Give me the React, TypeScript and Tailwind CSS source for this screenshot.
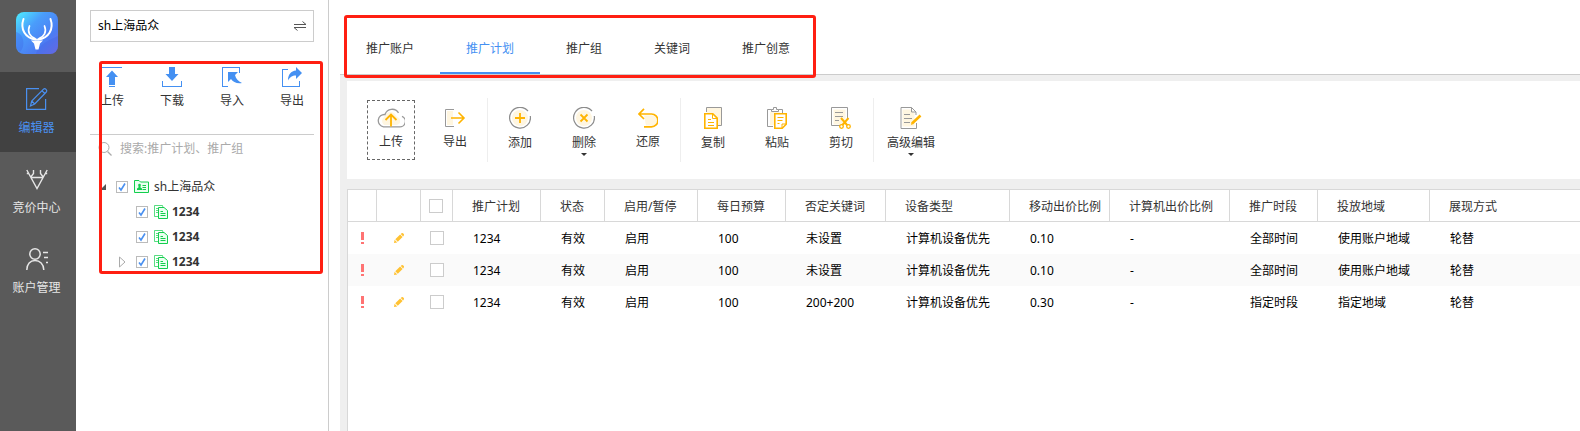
import { FC, ReactNode } from "react";

const LogoIcon = () => (
    <svg viewBox="0 0 42 42" className="size-[42px]">
        <defs>
            <linearGradient id="logo" x1="0" y1="0" x2="1" y2="1">
                <stop offset="0" stopColor="#4df0ff" />
                <stop offset="0.35" stopColor="#4a9dfb" />
                <stop offset="0.7" stopColor="#4c7cf3" />
                <stop offset="1" stopColor="#7b6be0" />
            </linearGradient>
        </defs>
        <rect width="42" height="42" rx="8" fill="url(#logo)" />
        <path d="M0 20C8 22 10 34 4 40A8 8 0 0 1 0 34zM20 42C22 32 34 28 42 24V34A8 8 0 0 1 34 42z" fill="#3f63e6" opacity="0.35" />
        <g fill="none" stroke="#fff" strokeLinecap="round">
            <path d="M7.500 7C4 17 9 26 20 27.500M34.500 7C38 17 33 26 22 27.500" strokeWidth="2" />
            <path d="M13.500 14C11 20 14 25 19 26.500M28.500 14C31 20 28 25 23 26.500" strokeWidth="1.700" />
        </g>
        <path d="M15 28.500h12l-3 3-1.500 6h-3l-1.500-6z" fill="#fff" />
    </svg>
);

const EditorIcon = () => (
    <svg viewBox="0 0 22 22" className="size-[22px]" fill="none" stroke="currentColor" strokeWidth="1.200">
        <path d="M13 .6H.6v20.800h19V11" />
        <path d="M4.500 18l1.200-5L17.500 1.200q1.200-1 2.500.2 1.300 1.300.3 2.600L8.700 16zM5.700 13L8.700 16M16 2.800l3.200 3.100" />
    </svg>
);

const BidIcon = () => (
    <svg viewBox="0 0 22 22" className="size-[22px]" fill="none" stroke="currentColor" strokeWidth="1.400">
        <path d="M.8 2L11 20.500 21.200 2M4.500 9.500h13M7.500 2v3.500L4.800 9M14.500 2v3.500L17.200 9M.8 5.500h2M21.200 5.500h-2" />
    </svg>
);

const AccountIcon = () => (
    <svg viewBox="0 0 22 22" className="size-[22px]" fill="none" stroke="currentColor" strokeWidth="1.500">
        <circle cx="9" cy="6" r="5.200" />
        <path d="M.8 22c0-6 3.500-9.500 8.200-9.500s8.800 3.500 8.800 9.500M17 4.500h5M18 9.500h4M20 14.500h2" />
    </svg>
);

const UploadIcon = () => (
    <svg viewBox="0 0 20 20" className="size-5" fill="currentColor">
        <path d="M0 0h20v1H0zM10 3.500l6 6.500h-3v8H7v-8H4zM7 19h6v1H7z" />
    </svg>
);

const DownloadIcon = () => (
    <svg viewBox="0 0 20 20" className="size-5" fill="currentColor">
        <path d="M7 0h6v7h3.500L10 14 3.500 7H7zM0 14h1v5h18v-5h1v6H0z" />
    </svg>
);

const ImportIcon = () => (
    <svg viewBox="0 0 20 20" className="size-5" fill="currentColor">
        <path d="M0 0h18v6h-1V1H1v18h5v1H0zM6 5h10l-3 3c1 4 3 6 7 8-5 1-9-1-11-4l-3 3z" />
    </svg>
);

const ExportIcon = () => (
    <svg viewBox="0 0 20 20" className="size-5" fill="currentColor">
        <path d="M0 2h6v1H1v16h16v-5h1v6H0zM14 0l6 6-6 6V8.500c-4 0-6 1.500-8 5 0-6 3-9.500 8-10z" />
    </svg>
);

const SwapIcon = () => (
    <svg viewBox="0 0 12 10" className="w-3 h-[10px]" fill="none" stroke="#555" strokeWidth="1">
        <path d="M0 3.500h12L8.500 .5M12 6.500H0L3.500 9.500" />
    </svg>
);

const SearchIcon = () => (
    <svg viewBox="0 0 14 14" className="size-[14px] shrink-0" fill="none" stroke="#aaa">
        <circle cx="6" cy="5.500" r="5" />
        <path d="M9.500 9.500L13.500 13.500" strokeWidth="1.300" />
    </svg>
);

const FolderIcon = () => (
    <svg viewBox="0 0 15 13" className="w-[15px] h-[13px]" fill="none" stroke="#13ce4d">
        <path d="M.5 12.500V.5H5l1.500 1.500h8v10.500z" fill="#eafff0" />
        <path d="M8.500 5.500H12M8.500 7.500H12M8.500 9.500H12" />
        <path d="M3 10h5V8.500L6.500 7.500v-2h-2v2L3 8.500z" fill="#13ce4d" stroke="none" />
        <circle cx="5.500" cy="5" r="1.300" fill="#13ce4d" stroke="none" />
    </svg>
);

const PlanIcon = () => (
    <svg viewBox="0 0 14 14" className="size-[14px]" fill="none" stroke="#13ce4d">
        <path d="M4 11.500H.5V.5h8L9 2.500M2 3.500h2.500M2 5.500h2M2 7.500h2" opacity="0.7" />
        <path d="M4.500 13.500v-11H10l3.500 3v8z" fill="#eafff0" />
        <path d="M6.500 6.500H9M6.500 8.500h5M6.500 10.500h5" />
    </svg>
);

const CloudIcon = () => (
    <svg viewBox="0 0 28 20" className="w-7 h-5" fill="none">
        <path d="M7 17a5 5 0 0 1 0-8C9 3 17 2 19 8l4 3v4l-3 2z" fill="#fff6e0" />
        <path d="M21.500 4.800A7.500 7.500 0 0 0 8 6.500 6.200 6.200 0 0 0 6.500 18.800H22a5.500 5.500 0 0 0 3-10.500" stroke="#999" strokeWidth="1.300" />
        <path d="M14 18.500V7M8.500 12L14 6.500l5.500 5.500" stroke="#ffb400" strokeWidth="1.800" />
    </svg>
);

const OutIcon = () => (
    <svg viewBox="0 0 22 20" className="w-[22px] h-5" fill="none">
        <path d="M3 3h6v14H3z" fill="#fff6e0" />
        <path d="M10 1.500H1.500v17H10" stroke="#999" />
        <path d="M7 10h13M14.500 4.500L20 10l-5.500 5.500" stroke="#ffb400" strokeWidth="1.600" />
    </svg>
);

const AddIcon = () => (
    <svg viewBox="0 0 22 22" className="size-[22px]" fill="none">
        <circle cx="11" cy="11" r="8" fill="#fff6e0" />
        <path d="M19 4A10.400 10.400 0 1 0 21.300 9" stroke="#8c8c8c" strokeWidth="1.200" />
        <path d="M11 6v10M6 11h10" stroke="#ffb400" strokeWidth="1.800" />
    </svg>
);

const DeleteIcon = () => (
    <svg viewBox="0 0 22 22" className="size-[22px]" fill="none">
        <circle cx="11" cy="11" r="8" fill="#fff6e0" />
        <path d="M19 4A10.400 10.400 0 1 0 21.300 9" stroke="#8c8c8c" strokeWidth="1.200" />
        <path d="M7.500 7.500l7 7M14.500 7.500l-7 7" stroke="#ffb400" strokeWidth="1.800" />
    </svg>
);

const UndoIcon = () => (
    <svg viewBox="0 0 20 20" className="size-5" fill="none">
        <path d="M6 7.500h8a5 5 0 0 1 0 10H8z" fill="#fff6e0" />
        <path d="M6 .8L1 6l5 5M1 6h12.500a6.400 6.400 0 0 1 0 12.800H6" stroke="#ffb400" strokeWidth="1.700" />
    </svg>
);

const CopyIcon = () => (
    <svg viewBox="0 0 18 22" className="w-[18px] h-[22px]" fill="none">
        <path d="M2.500 5V.5h15v18H14" stroke="#999" fill="#fff6e0" />
        <path d="M.8 6.800h8l4.400 4.400v10H.8z" fill="#fff" stroke="#ffb400" strokeWidth="1.600" />
        <path d="M8.500 7v4.500H13M4 12.500h3M4 15.500h6M4 18.500h6" stroke="#ffb400" />
    </svg>
);

const PasteIcon = () => (
    <svg viewBox="0 0 20 22" className="w-5 h-[22px]" fill="none">
        <path d="M3 5h10v13H3z" fill="#fff6e0" />
        <path d="M6 19.500H.5v-17h4v2h7v-2h4V6M4.500 2.500H6.500V.5h3v2h2" stroke="#999" />
        <path d="M7.800 6.800h11.400v10.400l-4 4H7.800z" fill="#fff" stroke="#ffb400" strokeWidth="1.600" />
        <path d="M10.500 10.500h6M10.500 13.500h5M10.500 16.500h2M15 21v-4h4" stroke="#ffb400" />
    </svg>
);

const CutIcon = () => (
    <svg viewBox="0 0 20 22" className="w-5 h-[22px]" fill="none">
        <path d="M2.500 2.500h12v15h-12z" fill="#fff6e0" />
        <path d="M9 18.500H.5V.5h16V11M4 5.500h8M4 9.500h8M4 13.500h4" stroke="#999" />
        <path d="M10 11l6.500 7.500M17.500 11L11 18.500" stroke="#ffb400" strokeWidth="2" />
        <circle cx="10.500" cy="19.500" r="1.800" fill="#fff" stroke="#ffb400" strokeWidth="1.300" />
        <circle cx="17.500" cy="19.500" r="1.800" fill="#fff" stroke="#ffb400" strokeWidth="1.300" />
    </svg>
);

const AdvancedIcon = () => (
    <svg viewBox="0 0 22 22" className="size-[22px]" fill="none">
        <path d="M2.500 2.500h9l3 4v13h-12z" fill="#fff6e0" />
        <path d="M16.500 16v5.500H1V.5h10.500l4.500 4.500v3M11.500 .5V5H16M4 7.500h6M4 11.500h8M4 15.500h6" stroke="#999" />
        <path d="M12 16.500l8.500-8" stroke="#ffb400" strokeWidth="2.600" />
        <path d="M11 18l.5-2.500L13 17z" fill="#ffb400" />
    </svg>
);

const PencilIcon = () => (
    <svg viewBox="0 0 10 10" className="size-[10px]" fill="#ffc233">
        <path d="M0 10l.6-3.200 2.600 2.600zM1.300 6.200l4.800-4.600 2.500 2.500-4.800 4.700zM6.800 1l.7-.7q.8-.6 1.500 0l.8.800q.5.700 0 1.400l-.7.900z" />
    </svg>
);

const Caret = () => (
    <svg viewBox="0 0 6 4" className="w-[6px] h-1" fill="#333">
        <path d="M0 0h6L3 3z" />
    </svg>
);

const navItems = [
    { label: "编辑器", icon: <EditorIcon />, active: true },
    { label: "竞价中心", icon: <BidIcon />, active: false },
    { label: "账户管理", icon: <AccountIcon />, active: false },
];

const syncItems = [
    { label: "上传", icon: <UploadIcon /> },
    { label: "下载", icon: <DownloadIcon /> },
    { label: "导入", icon: <ImportIcon /> },
    { label: "导出", icon: <ExportIcon /> },
];

const tabs = ["推广账户", "推广计划", "推广组", "关键词", "推广创意"];

const columns = [
    { name: "推广计划", width: "w-[88px]" },
    { name: "状态", width: "w-[64px]" },
    { name: "启用/暂停", width: "w-[93px]" },
    { name: "每日预算", width: "w-[88px]" },
    { name: "否定关键词", width: "w-[100px]" },
    { name: "设备类型", width: "w-[124px]" },
    { name: "移动出价比例", width: "w-[100px]" },
    { name: "计算机出价比例", width: "w-[120px]" },
    { name: "推广时段", width: "w-[88px]" },
    { name: "投放地域", width: "w-[112px]" },
    { name: "展现方式", width: "" },
];

const rows = [
    ["1234", "有效", "启用", "100", "未设置", "计算机设备优先", "0.10", "-", "全部时间", "使用账户地域", "轮替"],
    ["1234", "有效", "启用", "100", "未设置", "计算机设备优先", "0.10", "-", "全部时间", "使用账户地域", "轮替"],
    ["1234", "有效", "启用", "100", "200+200", "计算机设备优先", "0.30", "-", "指定时段", "指定地域", "轮替"],
];

interface CheckProps {
    label: string
    checked?: boolean
}

const TreeCheck: FC<CheckProps> = ({ label, checked }) => (
    <span className="grid size-3 shrink-0">
        <input
            type="checkbox"
            aria-label={label}
            defaultChecked={checked}
            className="peer col-start-1 row-start-1 size-3 appearance-none border border-[#bbb] bg-white"
        />
        <svg viewBox="0 0 12 12" className="pointer-events-none invisible col-start-1 row-start-1 size-3 peer-checked:visible" fill="none">
            <path d="M3 6.500L5 9l4-6.500" stroke="#4a90f0" strokeWidth="1.600" />
        </svg>
    </span>
);

const GridCheck: FC<CheckProps> = ({ label }) => (
    <input type="checkbox" aria-label={label} className="block size-[14px] appearance-none border border-[#ccc] bg-white checked:bg-[#4a90f0]" />
);

interface ToolProps {
    label: string
    icon: ReactNode
    focused?: boolean
    menu?: boolean
}

const Tool: FC<ToolProps> = ({ label, icon, focused, menu }) => (
    <button
        type="button"
        className={`mx-2 flex h-[60px] min-w-12 flex-col items-center justify-center gap-1 border border-dashed
            ${focused ? "border-[#666]" : "border-transparent"}`}
    >
        {icon}
        <span className="leading-5">{label}</span>
        {menu && <span className="-my-1"><Caret /></span>}
    </button>
);

const Divider = () => <div className="h-16 w-px bg-[#eee]" />;

const Sidebar = () => (
    <nav className="flex w-[76px] shrink-0 flex-col bg-[#5a5a5a] text-[#e6e6e6]">
        <div className="flex h-[72px] items-start justify-center pt-3 pr-[3px]">
            <LogoIcon />
        </div>
        {navItems.map((item) => (
            <a
                key={item.label}
                href="#"
                className={`flex h-20 flex-col items-center gap-2 pt-4 pr-[3px] ${item.active ? "bg-[#414141] text-[#4a90f0]" : ""}`}
            >
                {item.icon}
                <span className="leading-5">{item.label}</span>
            </a>
        ))}
    </nav>
);

const AccountPanel = () => (
    <aside className="relative w-[253px] shrink-0 border-r border-[#ccc] px-[14px] pt-[10px]">
        <button type="button" className="flex h-8 w-full items-center justify-between border border-[#ccc] px-[7px] text-black">
            sh上海品众
            <SwapIcon />
        </button>
        <div className="mt-6 flex h-[69px] justify-between border-b border-[#ccc]">
            {syncItems.map((item) => (
                <button key={item.label} type="button" className="flex w-11 flex-col items-center gap-1 pt-px">
                    <span className="text-[#4490f2]">{item.icon}</span>
                    <span className="leading-5">{item.label}</span>
                </button>
            ))}
        </div>
        <label className="flex h-7 items-center gap-2 pl-2">
            <SearchIcon />
            <input
                type="text"
                aria-label="搜索"
                placeholder="搜索:推广计划、推广组"
                className="w-full min-w-0 outline-none placeholder:text-[#aaa]"
            />
        </label>
        <ul className="mt-[11px] text-[#333]">
            <li className="flex h-[25px] items-center pl-[10px]">
                <svg viewBox="0 0 6 6" className="mr-[10px] size-[6px]" fill="#555"><path d="M6 0v6H0z" /></svg>
                <TreeCheck label="sh上海品众" checked />
                <span className="mr-[5px] ml-[6px]"><FolderIcon /></span>
                sh上海品众
            </li>
            {[false, false, true].map((expandable, i) => (
                <li key={i} className="flex h-[25px] items-center pl-7">
                    <span className="w-[18px]">
                        {expandable && (
                            <svg viewBox="0 0 7 12" className="ml-px h-3 w-[7px]" fill="none" stroke="#aaa"><path d="M.5 1v10l5.500-5z" /></svg>
                        )}
                    </span>
                    <TreeCheck label="1234" checked />
                    <span className="mr-1 ml-[6px]"><PlanIcon /></span>
                    <b className="font-bold">1234</b>
                </li>
            ))}
        </ul>
        <div className="pointer-events-none absolute top-[61px] right-[5px] left-[23px] h-[213px] rounded-[3px] border-3 border-[#ff1f12]" />
    </aside>
);

const Tabs = () => (
    <div className="relative flex h-[75px] border-b border-[#ccc]">
        {tabs.map((tab) => (
            <button
                key={tab}
                type="button"
                className={`border-b-2 px-[26px] pt-[26px] ${tab === "推广计划" ? "border-[#4490f2] text-[#4490f2]" : "border-transparent"}`}
            >
                {tab}
            </button>
        ))}
        <div className="pointer-events-none absolute top-[15px] left-1 h-[63px] w-[472px] rounded-[3px] border-3 border-[#ff1f12]" />
    </div>
);

const Toolbar = () => (
    <div className="flex h-[98px] items-center bg-white pl-3">
        <Tool label="上传" icon={<CloudIcon />} focused />
        <Tool label="导出" icon={<OutIcon />} />
        <Divider />
        <Tool label="添加" icon={<AddIcon />} />
        <Tool label="删除" icon={<DeleteIcon />} menu />
        <Tool label="还原" icon={<UndoIcon />} />
        <Divider />
        <Tool label="复制" icon={<CopyIcon />} />
        <Tool label="粘贴" icon={<PasteIcon />} />
        <Tool label="剪切" icon={<CutIcon />} />
        <Divider />
        <div className="ml-1">
            <Tool label="高级编辑" icon={<AdvancedIcon />} menu />
        </div>
    </div>
);

const PlanTable = () => (
    <div className="mt-[10px] flex-1 border-t border-l border-[#d8d8d8] bg-white">
        <table className="w-full table-fixed border-separate border-spacing-0 text-left whitespace-nowrap">
            <thead>
                <tr className="h-8">
                    <th className="w-[29px] border-r border-b border-[#d8d8d8]" />
                    <th className="w-[44px] border-r border-b border-[#d8d8d8]" />
                    <th className="w-[32px] border-r border-b border-[#d8d8d8] pl-2">
                        <GridCheck label="全选" />
                    </th>
                    {columns.map((col) => (
                        <th key={col.name} className={`${col.width} border-r border-b border-[#d8d8d8] pt-[2px] pl-[19px] font-normal last:border-r-0`}>
                            {col.name}
                        </th>
                    ))}
                </tr>
            </thead>
            <tbody className="text-black">
                {rows.map((row, i) => (
                    <tr key={i} className="h-8 even:bg-[#fafafa]">
                        <td>
                            <svg viewBox="0 0 3 12" className="mx-auto h-3 w-[3px]" fill="#ff7373">
                                <path d="M0 0h3v8H0zM0 10h3v2H0z" />
                            </svg>
                        </td>
                        <td className="pl-[17px]"><PencilIcon /></td>
                        <td className="pl-[9px]"><GridCheck label={`选择第${i + 1}行`} /></td>
                        {row.map((cell, j) => (
                            <td key={j} className="pt-[2px] pl-5">{cell}</td>
                        ))}
                    </tr>
                ))}
            </tbody>
        </table>
    </div>
);

const App = () => {
    return (
        <div className="flex min-h-screen bg-white font-['Noto_Sans','Noto_Sans_CJK_SC',sans-serif] text-[12px] text-[#333]">
            <Sidebar />
            <AccountPanel />
            <main className="ml-[11px] flex min-w-0 flex-1 flex-col">
                <Tabs />
                <div className="flex flex-1 flex-col bg-[#efefef] pt-[6px] pl-[7px]">
                    <Toolbar />
                    <PlanTable />
                </div>
            </main>
        </div>
    )
}; export default App;
